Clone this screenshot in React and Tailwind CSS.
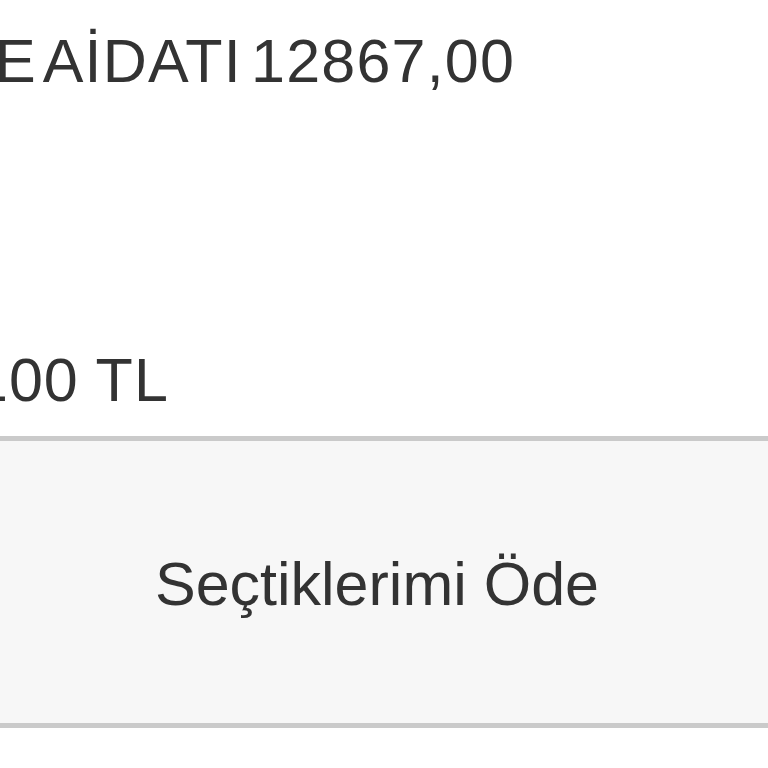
import React from 'react'

function App() {
  return (
    <div className="w-full min-h-[768px] bg-white overflow-hidden text-[#333333] font-['Liberation_Sans',Arial,sans-serif]">
      <div className="pt-[31px] text-[61px] leading-none whitespace-nowrap ml-[-5px] tracking-[1.2px] [word-spacing:-9px]">
        E AİDATI 12867,00
      </div>

      <div className="mt-[258px] text-[61px] leading-none whitespace-nowrap ml-[-26px] tracking-[1px]">
        100 TL
      </div>

      <div className="mt-[25px] border-t-[5px] border-b-[5px] border-[#cacaca] bg-[#f7f7f7]">
        <button
          type="button"
          className="w-full pt-[113px] pb-[108px] pr-[14px] text-[61px] leading-none text-center text-[#333333]"
        >
          Seçtiklerimi Öde
        </button>
      </div>
    </div>
  )
}

export default App
